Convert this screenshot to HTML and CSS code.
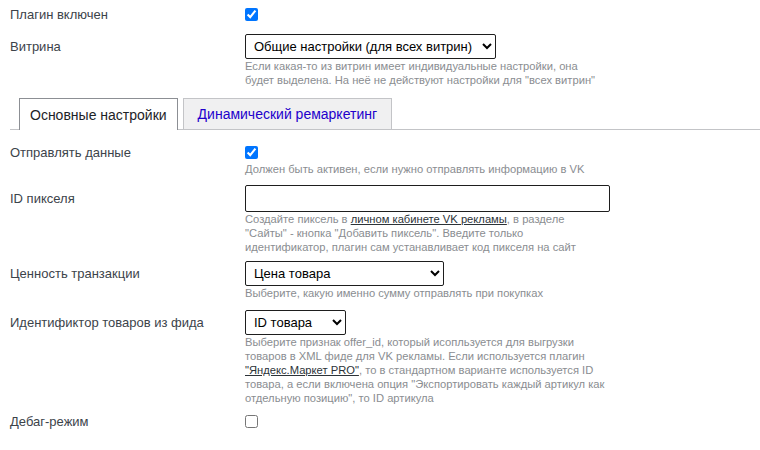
FILE: index.html
```html
<!DOCTYPE html>
<html lang="ru">
<head>
<meta charset="utf-8">
<title>Настройки</title>
<link rel="stylesheet" href="styles.css">
</head>
<body>
<div class="page">
  <div class="row row-first">
    <label class="lbl">Плагин включен</label>
    <div class="ctl"><input type="checkbox" class="cb" checked></div>
  </div>
  <div class="row row-store">
    <label class="lbl">Витрина</label>
    <div class="ctl">
      <select class="sel sel-store">
        <option>Общие настройки (для всех витрин)</option>
      </select>
    </div>
    <p class="desc">Если какая-то из витрин имеет индивидуальные настройки, она<br>будет выделена. На неё не действуют настройки для "всех витрин"</p>
  </div>

  <nav class="tabs">
    <span class="tab tab-active">Основные настройки</span>
    <a class="tab tab-link" href="#">Динамический ремаркетинг</a>
  </nav>

  <div class="row row-after-tabs">
    <label class="lbl">Отправлять данные</label>
    <div class="ctl"><input type="checkbox" class="cb" checked></div>
    <p class="desc desc-cb">Должен быть активен, если нужно отправлять информацию в VK</p>
  </div>
  <div class="row">
    <label class="lbl">ID пикселя</label>
    <div class="ctl"><input type="text" class="txt"></div>
    <p class="desc">Создайте пиксель в <a href="#">личном кабинете VK рекламы</a>, в разделе<br>"Сайты" - кнопка "Добавить пиксель". Введите только<br>идентификатор, плагин сам устанавливает код пикселя на сайт</p>
  </div>
  <div class="row row-value">
    <label class="lbl">Ценность транзакции</label>
    <div class="ctl">
      <select class="sel sel-value"><option>Цена товара</option></select>
    </div>
    <p class="desc">Выберите, какую именно сумму отправлять при покупках</p>
  </div>
  <div class="row row-id">
    <label class="lbl">Идентификтор товаров из фида</label>
    <div class="ctl">
      <select class="sel sel-id"><option>ID товара</option></select>
    </div>
    <p class="desc">Выберите признак offer_id, который исопльзуется для выгрузки<br>товаров в XML фиде для VK рекламы. Если используется плагин<br><a href="#">"Яндекс.Маркет PRO"</a>, то в стандартном варианте используется ID<br>товара, а если включена опция "Экспортировать каждый артикул как<br>отдельную позицию", то ID артикула</p>
  </div>
  <div class="row row-debug">
    <label class="lbl">Дебаг-режим</label>
    <div class="ctl"><input type="checkbox" class="cb"></div>
  </div>
</div>
</body>
</html>
```

FILE: styles.css
```css
html, body {
  margin: 0;
  padding: 0;
  background: #ffffff;
}

body {
  font-family: "Liberation Sans", Arial, sans-serif;
  color: #3c434a;
  font-size: 13px;
}

.page {
  padding: 0 0 0 10px;
}

.row {
  display: grid;
  grid-template-columns: 235px 1fr;
  align-items: center;
  margin-top: 9px;
}

.row-first {
  margin-top: 7px;
}

.row-store {
  margin-top: 12px;
}

.row-after-tabs {
  margin-top: 15px;
}

.row-value {
  margin-top: 7px;
}

.row-id {
  margin-top: 10px;
}

.row-debug {
  margin-top: 9px;
}

.lbl {
  grid-column: 1;
  grid-row: 1;
  font-size: 13px;
  line-height: 15px;
  color: #3c434a;
}

.ctl {
  grid-column: 2;
  grid-row: 1;
  display: flex;
}

.desc {
  grid-column: 2;
  grid-row: 2;
  margin: 0;
  font-size: 11.2px;
  line-height: 14px;
  color: #8a8d91;
}

.desc-cb {
  margin-top: 2px;
}

.desc a {
  color: #2c3338;
  text-decoration: underline;
}

.cb {
  margin: 0;
  width: 13px;
  height: 13px;
  accent-color: #0075ff;
}

.sel {
  margin: 0;
  height: 25px;
  font-family: "Liberation Sans", Arial, sans-serif;
  font-size: 13px;
  color: #000;
  background: #fff;
  border: 1px solid #1e1e1e;
  border-radius: 2px;
  padding: 0 2px 0 4px;
}

.sel-store { width: 251px; }
.sel-value { width: 199px; }
.sel-id { width: 101px; }

.txt {
  margin: 0;
  width: 365px;
  height: 27px;
  box-sizing: border-box;
  border: 1px solid #1e1e1e;
  border-radius: 2px;
  padding: 0 4px;
  font-size: 14px;
}

.tabs {
  display: flex;
  gap: 5px;
  margin-top: 11px;
  padding-left: 9px;
  border-bottom: 1px solid #c3c4c7;
  height: 31px;
}

.tab {
  display: flex;
  align-items: center;
  box-sizing: border-box;
  height: 31px;
  padding: 0 10px;
  font-size: 14px;
  text-decoration: none;
  border: 1px solid #c3c4c7;
  border-bottom: none;
  background: #f0f0f1;
  color: #2200cc;
}

.tab-link {
  padding: 0 14px;
}

.tab-active {
  height: 32px;
  background: #ffffff;
  color: #1d2327;
  border-color: #8c8f94;
}
```
